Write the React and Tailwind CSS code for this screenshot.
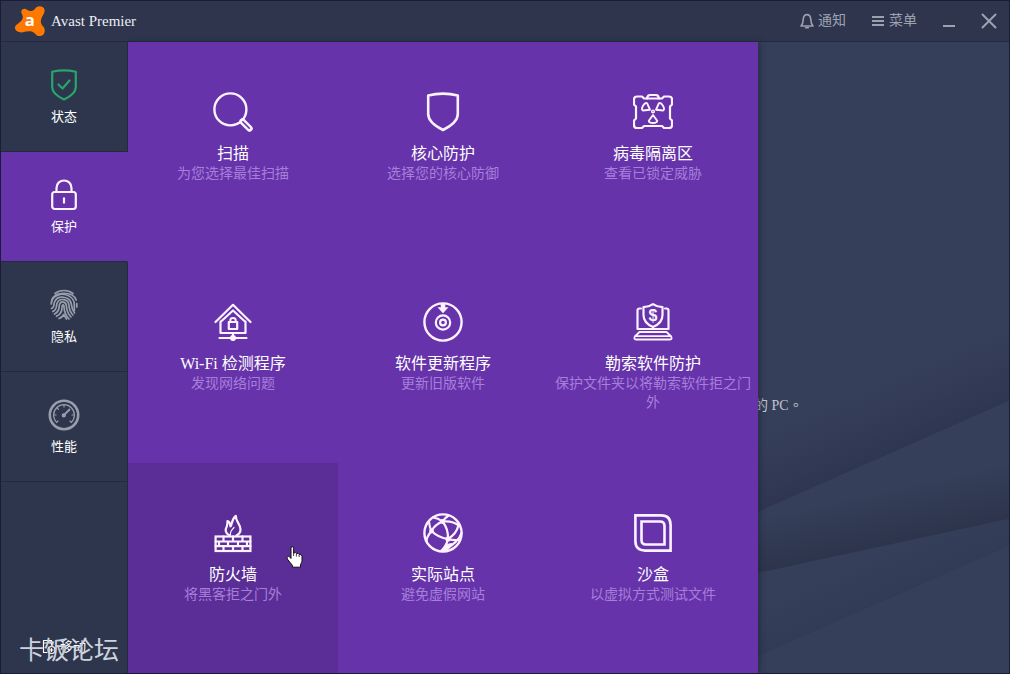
const svgProps = {
  fill: "none",
  stroke: "currentColor",
  strokeLinecap: "round",
  strokeLinejoin: "round",
  "aria-hidden": true,
};

function Logo() {
  return (
    <svg viewBox="0 0 90 90" className="size-[30px]" aria-hidden="true">
      <path
        d="M19 18 C18 9 29 5 36 11 C44 17 54 16 60 8 C66 -2 84 -2 88 9 C91 18 85 25 82 31 C76 43 76 52 83 60 C94 70 90 88 76 90 C66 91 62 85 57 80 C49 74 38 75 29 77 C18 82 2 78 0 67 C-1 57 8 54 15 48 C23 41 25 34 22 27 C20 23 19 21 19 18 Z"
        fill="#ff7800"
      />
      <text x="44" y="59" textAnchor="middle" fill="#fff" className="font-['Open_Sans',sans-serif] text-[50px] font-bold">a</text>
    </svg>
  );
}

function BellIcon() {
  return (
    <svg viewBox="0 0 14 16" className="h-4 w-3.5" {...svgProps} strokeWidth="1.6">
      <path d="M1 13 C3 11 3 9.5 3.2 6.5 C3.4 3.5 5 1.6 7 1.6 C9 1.6 10.6 3.5 10.8 6.5 C11 9.5 11 11 13 13 Z" />
      <path d="M5.600 14.800 H8.400" />
    </svg>
  );
}

function StatusIcon() {
  return (
    <svg viewBox="0 0 32 32" className="size-8 text-[#27a56c]" {...svgProps} strokeWidth="2.2">
      <path d="M4.2 2.800 Q16 0 27.8 2.800 V18 C27.8 23.5 22.5 27.500 16 30.500 C9.500 27.500 4.2 23.5 4.2 18 Z" />
      <path d="M10.500 15.500 L14.500 19.500 L21.500 11.500" />
    </svg>
  );
}

function LockIcon() {
  return (
    <svg viewBox="0 0 32 32" className="size-8 text-[#fdf2ff]" {...svgProps} strokeWidth="2.2">
      <rect x="4.200" y="13" width="23.600" height="17" rx="2.500" />
      <path d="M8.500 13 V9 C8.500 -1 23.500 -1 23.500 9 V13" />
      <path d="M16 18.500 V24.500" strokeLinecap="butt" />
    </svg>
  );
}

function FingerprintIcon() {
  return (
    <svg viewBox="0 0 32 32" className="size-8 text-[#989eac]" {...svgProps} strokeWidth="1.700">
      <path d="M7 4.500 C12 0.500 20 0.500 25 4.500" />
      <path d="M3.800 11 C7 2 25 2 28.200 11 M28.800 14.500 V18" />
      <path d="M3.200 15 C3.500 5.500 14 4.500 18 5.800 C24 7.500 26.500 12 26.300 16 V21.500" />
      <path d="M3.500 19.500 C6.500 18.500 5.500 15.500 6.500 13 C9.500 5.800 22.500 6.500 23.500 16 C23.700 19 24.500 21 26.500 24" />
      <path d="M4.800 22.500 C9.500 20.500 8 17 9 14.300 C11.500 8.500 20.500 9.500 21 16.500 C21.200 20.500 22.500 23.500 24.800 26" />
      <path d="M6.500 25 C12.500 22 10.500 18 11.500 15.500 C13 11.500 18.200 12.500 18.400 17 C18.600 21.500 20.500 25.500 23 28" />
      <path d="M8.500 27.300 C16 23.500 13.300 19 14.200 16.800 C15 15.200 16 16 16 18 C16.200 22.500 18 27 21 30" />
      <path d="M11 29.500 C13.500 28.500 15 27 15.800 25.500 L18.500 30" />
    </svg>
  );
}

function GaugeIcon() {
  return (
    <svg viewBox="0 0 32 32" className="size-8 text-[#989eac]" {...svgProps}>
      <circle cx="16" cy="16" r="14.200" strokeWidth="2.600" />
      <path d="M8.600 23.400 A10.400 10.400 0 1 1 23.400 23.400" strokeWidth="1.200" />
      <path d="M16 6 V8 M6 16 H8 M24 16 H26 M9 9 L10.400 10.400 M8.600 23.400 L10 22 M23.400 23.400 L22 22" strokeWidth="1.200" />
      <path d="M15 17 L21.500 10.500" strokeWidth="1.800" />
      <circle cx="15.800" cy="16.400" r="2.100" fill="currentColor" stroke="none" />
    </svg>
  );
}

function ScanIcon() {
  return (
    <svg viewBox="0 0 40 40" className="size-10" {...svgProps} strokeWidth="2.400">
      <circle cx="17.400" cy="17.400" r="16" />
      <path d="M29.500 29.500 L36.500 36.500" strokeWidth="6.400" />
      <path d="M29.800 29.800 L36.300 36.300" strokeWidth="1.600" stroke="#6633ab" />
    </svg>
  );
}

function ShieldIcon() {
  return (
    <svg viewBox="0 0 40 40" className="size-10" {...svgProps} strokeWidth="2.600">
      <path d="M5.200 3.400 Q20 -0.200 34.800 3.400 V22 C34.800 28.500 29 33.500 20 38 C11 33.500 5.200 28.500 5.200 22 Z" />
    </svg>
  );
}

function QuarantineIcon() {
  const petal = "M20 23 L15.800 28.800 Q15.800 31 20 31 Q24.200 31 24.200 28.800 Z";
  return (
    <svg viewBox="0 0 40 40" className="size-10" {...svgProps} strokeWidth="2.200">
      <path d="M4 4.500 H9 L11 6.500 H29 L31 4.500 H36 Q39 4.500 39 7.500 V12.500 L37 14.500 V26.500 L39 28.500 V33 Q39 36 36 36 H31 L29 34 H11 L9 36 H4 Q1 36 1 33 V28.500 L3 26.500 V14.500 L1 12.500 V7.500 Q1 4.500 4 4.500 Z" />
      <path d="M14 6.500 Q14.500 3 17 3 H23 Q25.500 3 26 6.500" />
      <g strokeWidth="1.900">
        <path d={petal} />
        <path d={petal} transform="rotate(120 20 19.500)" />
        <path d={petal} transform="rotate(240 20 19.500)" />
      </g>
      <circle cx="20" cy="19.500" r="1.300" strokeWidth="1.500" />
    </svg>
  );
}

function WifiHouseIcon() {
  return (
    <svg viewBox="0 0 40 40" className="size-10" {...svgProps} strokeWidth="2.200">
      <path d="M2.500 20 L20 2.800 L37.500 20" />
      <path d="M7.500 19.500 V31 H32.500 V19.500 M7.500 20 L20 8.500 L32.500 20" />
      <rect x="15.800" y="20" width="8.400" height="7" />
      <path d="M17.300 20 V18.500 C17.300 15.300 22.700 15.300 22.700 18.500 V20" strokeWidth="2" />
      <path d="M20 31 V36 M6.500 36 H33.500" />
      <circle cx="20" cy="36" r="3" fill="currentColor" stroke="none" />
    </svg>
  );
}

function UpdaterIcon() {
  return (
    <svg viewBox="0 0 40 40" className="size-10" {...svgProps} strokeWidth="2.400">
      <circle cx="20" cy="20" r="18.600" />
      <circle cx="20" cy="20.500" r="7.200" strokeWidth="2.200" />
      <circle cx="20" cy="20.500" r="2.900" strokeWidth="2.200" />
      <path d="M18 2 H22 V5.500 H25 L20 11 L15 5.500 H18 Z" fill="currentColor" strokeWidth="0.500" />
    </svg>
  );
}

function RansomwareIcon() {
  return (
    <svg viewBox="0 0 40 40" className="size-10" {...svgProps} strokeWidth="2.200">
      <path d="M20 2.200 C17 4.400 14 5 10.500 5.200 V13 C10.500 19 14 22.500 20 25 C26 22.500 29.500 19 29.500 13 V5.200 C26 5 23 4.400 20 2.200 Z" />
      <path d="M8 6.500 H6.500 Q4.500 6.500 4.500 8.500 V27 H35.500 V8.500 Q35.500 6.500 33.500 6.500 H32" />
      <path d="M6.500 30 L1.800 34.500 Q0.500 37.500 3 37.500 H37 Q39.500 37.500 38.200 34.500 L33.500 30 Z M3 34.200 H37" strokeWidth="1.800" />
      <text x="20" y="18.500" textAnchor="middle" fill="currentColor" stroke="none" className="font-['Liberation_Sans',sans-serif] text-[16px] font-bold">$</text>
    </svg>
  );
}

function FirewallIcon() {
  return (
    <svg viewBox="0 0 40 40" className="size-10" {...svgProps} strokeWidth="2.200">
      <path d="M16.500 22.500 C12 20 12 16.500 13.800 13.500 C14.500 11.500 14.500 10.500 14.500 8 C16.500 9 17.500 11 17.500 13.500 C19.500 10.500 18.500 6 22.800 2.800 C22.500 8.500 27.500 11 27.500 16.500 C27.500 19.500 25.500 21.500 23.500 22.500" />
      <path d="M17.500 22 C16.500 19 18.500 17 21 14.500" strokeWidth="1.200" />
      <rect x="2.600" y="23.500" width="34.800" height="14.500" strokeLinejoin="miter" />
      <path d="M2.500 28.500 H37.500 M2.500 33.200 H37.500 M10.500 23.500 V28.500 M20 23.500 V28.500 M29.500 23.500 V28.500 M6 28.500 V33.200 M15 28.500 V33.200 M25 28.500 V33.200 M34 28.500 V33.200 M10.500 33.200 V38 M20 33.200 V38 M29.500 33.200 V38" />
    </svg>
  );
}

function GlobeIcon() {
  return (
    <svg viewBox="0 0 40 40" className="size-10" {...svgProps} strokeWidth="2.200">
      <circle cx="20" cy="20" r="18.600" strokeWidth="2.400" />
      <path d="M10 4.500 Q15 5 19.500 8.500 Q30 7.500 36.500 13" />
      <path d="M25.500 2.500 Q22 5 19.500 8.500 Q12 11.500 8.500 18 Q3.500 24 3.500 28" />
      <path d="M6 9 Q6.500 14 8.500 18 Q15 24.500 25 26 Q33.500 21 35.500 12" />
      <path d="M19.500 8.500 Q25.500 16 25 26 Q23.500 33 18 38" />
      <path d="M25 26 Q30 27.500 36 27 M38.500 20 Q36 29 20 38" />
      <circle cx="19.500" cy="8.500" r="2.400" fill="currentColor" stroke="none" />
      <circle cx="8.500" cy="18" r="2.400" fill="currentColor" stroke="none" />
      <circle cx="25" cy="26" r="2.600" fill="currentColor" stroke="none" />
      <path d="M20 38 L23.500 31.500 L29 30.500 L26 35.500 Z" fill="currentColor" strokeWidth="1" />
    </svg>
  );
}

function SandboxIcon() {
  return (
    <svg viewBox="0 0 40 40" className="size-10" {...svgProps} strokeLinejoin="miter" strokeWidth="2.600">
      <path d="M2.400 2.400 H28 Q37.600 2.400 37.600 12 V37.600 H12 Q2.400 37.600 2.400 28 Z" />
      <path d="M8.500 8.500 H27 Q31.500 8.500 31.500 13 V31.500 H13 Q8.500 31.500 8.500 27 Z" />
    </svg>
  );
}

function MobileIcon() {
  return (
    <svg viewBox="0 0 14 16" className="h-4 w-3.5" {...svgProps} strokeWidth="1.2">
      <path d="M5 13.500 H1.500 V1.500 H9.500 V6.500 M1.500 4 H9.500" />
      <circle cx="9.500" cy="11" r="3.500" />
      <path d="M9.500 9.500 V12.500 M8 11 H11" />
    </svg>
  );
}

function HandCursor() {
  return (
    <svg viewBox="0 0 17 22" className="absolute left-[158px] top-[83px] h-[22px] w-[17px]" aria-hidden="true">
      <path
        d="M5 12.500 V2.200 Q5 0.700 6.300 0.700 Q7.600 0.700 7.600 2.200 V7 Q9.800 5.800 10.400 7.600 Q12.500 6.600 13.100 8.500 Q16 7.800 16 10.500 V14.500 Q16 16.500 14.500 18.500 V21.200 H6.500 V19.500 L1.300 13 Q0.300 10.600 2.300 10.300 Q3.600 10.300 5 12.500 Z"
        fill="#fff"
        stroke="#111"
      />
      <path d="M7.600 7 V10 M10.400 8 V10.500 M13.100 9 V11" stroke="#111" strokeWidth="0.800" fill="none" />
    </svg>
  );
}

function Backdrop() {
  return (
    <svg viewBox="0 0 251 631" preserveAspectRatio="none" className="absolute inset-0 size-full" aria-hidden="true">
      <defs>
        <linearGradient id="ray1" gradientUnits="userSpaceOnUse" x1="125" y1="414" x2="97" y2="350">
          <stop offset="0" stopColor="#2f3652" />
          <stop offset="1" stopColor="#363f59" />
        </linearGradient>
        <linearGradient id="ray2" gradientUnits="userSpaceOnUse" x1="125" y1="504" x2="113" y2="450">
          <stop offset="0" stopColor="#2c354c" />
          <stop offset="1" stopColor="#363f59" />
        </linearGradient>
        <linearGradient id="ray3" gradientUnits="userSpaceOnUse" x1="125" y1="559" x2="107" y2="518">
          <stop offset="0" stopColor="#323b55" />
          <stop offset="1" stopColor="#363f59" />
        </linearGradient>
      </defs>
      <path d="M0 0 H251 V359 L0 470 Z" fill="url(#ray1)" />
      <path d="M0 470 L251 359 V477 L0 531 Z" fill="url(#ray2)" />
      <path d="M0 531 L251 477 V504 L0 614 Z" fill="url(#ray3)" />
    </svg>
  );
}

const navItems = [
  { label: "状态", icon: <StatusIcon /> },
  { label: "保护", icon: <LockIcon />, active: true },
  { label: "隐私", icon: <FingerprintIcon /> },
  { label: "性能", icon: <GaugeIcon /> },
];

const tiles = [
  { title: "扫描", text: "为您选择最佳扫描", icon: <ScanIcon /> },
  { title: "核心防护", text: "选择您的核心防御", icon: <ShieldIcon /> },
  { title: "病毒隔离区", text: "查看已锁定威胁", icon: <QuarantineIcon /> },
  { title: "Wi-Fi 检测程序", text: "发现网络问题", icon: <WifiHouseIcon /> },
  { title: "软件更新程序", text: "更新旧版软件", icon: <UpdaterIcon /> },
  { title: "勒索软件防护", text: "保护文件夹以将勒索软件拒之门外", icon: <RansomwareIcon /> },
  { title: "防火墙", text: "将黑客拒之门外", icon: <FirewallIcon />, hovered: true },
  { title: "实际站点", text: "避免虚假网站", icon: <GlobeIcon /> },
  { title: "沙盒", text: "以虚拟方式测试文件", icon: <SandboxIcon /> },
];

function Header() {
  return (
    <header className="flex h-[41px] items-center justify-between border-b border-[#232a40] bg-[#2e354d] pl-3.5 pr-3">
      <div className="flex items-center gap-1.5">
        <Logo />
        <h1 className="text-[15px] leading-5 text-[#eceef3]">Avast Premier</h1>
      </div>
      <div className="flex items-center gap-[25px] text-sm leading-5 text-[#9da2b1]">
        <button className="flex items-center gap-1">
          <BellIcon />
          通知
        </button>
        <button className="flex items-center gap-1">
          <svg viewBox="0 0 14 14" className="size-3.5" {...svgProps} strokeWidth="2" strokeLinecap="butt">
            <path d="M1 3 H13 M1 7 H13 M1 11 H13" />
          </svg>
          菜单
        </button>
        <button aria-label="最小化">
          <svg viewBox="0 0 14 14" className="size-3.5" {...svgProps} strokeWidth="2" strokeLinecap="butt">
            <path d="M1 12 H13" />
          </svg>
        </button>
        <button aria-label="关闭">
          <svg viewBox="0 0 16 16" className="size-4" {...svgProps} strokeWidth="2">
            <path d="M1.500 1.500 L14.500 14.500 M14.500 1.500 L1.500 14.500" />
          </svg>
        </button>
      </div>
    </header>
  );
}

function Sidebar() {
  return (
    <nav className="relative z-20 flex flex-col bg-[#2d364c] text-[13px] leading-4 text-white">
      {navItems.map((item) => (
        <button
          key={item.label}
          className={
            item.active
              ? "flex h-[110px] flex-col items-center gap-2 border-b border-r border-b-[#232a40] border-r-[#6633ab] bg-[#6633ab] pt-[27px]"
              : "flex h-[110px] flex-col items-center gap-2 border-b border-r border-[#232a40] pt-[27px]"
          }
        >
          {item.icon}
          {item.label}
        </button>
      ))}
      <div className="flex grow items-end justify-center border-r border-[#232a40] pb-[18px]">
        <button className="flex items-center gap-1">
          <MobileIcon />
          移动
        </button>
      </div>

      {/* Forum watermark */}
      <span className="absolute bottom-1 left-[18px] whitespace-nowrap text-[25px] leading-9 text-[#cdd2df]">卡饭论坛</span>
    </nav>
  );
}

function Tile({ title, text, icon, hovered }) {
  return (
    <button
      className={
        hovered
          ? "relative flex flex-col items-center justify-start bg-[#5b2d97] px-1.5 pt-[50px]"
          : "relative flex flex-col items-center justify-start px-1.5 pt-[50px]"
      }
    >
      {icon}
      <span className="mt-3 text-base leading-5 text-white">{title}</span>
      <span className="text-sm leading-[19px] text-[#a67fda]">{text}</span>
      {hovered && <HandCursor />}
    </button>
  );
}

export default function App() {
  return (
    <div className="flex min-h-screen flex-col border border-[#1b1d36] bg-[#363f59] font-['Liberation_Serif','Noto_Sans_CJK_SC',sans-serif]">
      <Header />
      <div className="grid grow grid-cols-[127px_630fr_251fr]">
        <Sidebar />
        <main className="relative z-10 grid grid-cols-3 grid-rows-3 bg-[#6633ab] text-[#fdf2ff] shadow-[2px_0_5px_rgba(25,30,45,0.5)]">
          {tiles.map((tile) => (
            <Tile key={tile.title} {...tile} />
          ))}
        </main>
        <section className="relative overflow-hidden">
          <Backdrop />
          <p className="relative -ml-1 pt-[352px] text-sm leading-5 text-[#c0c5d2]">
            的 PC<span lang="zh-TW" className="font-['Noto_Sans_CJK_TC',sans-serif]">。</span>
          </p>
        </section>
      </div>
    </div>
  );
}
